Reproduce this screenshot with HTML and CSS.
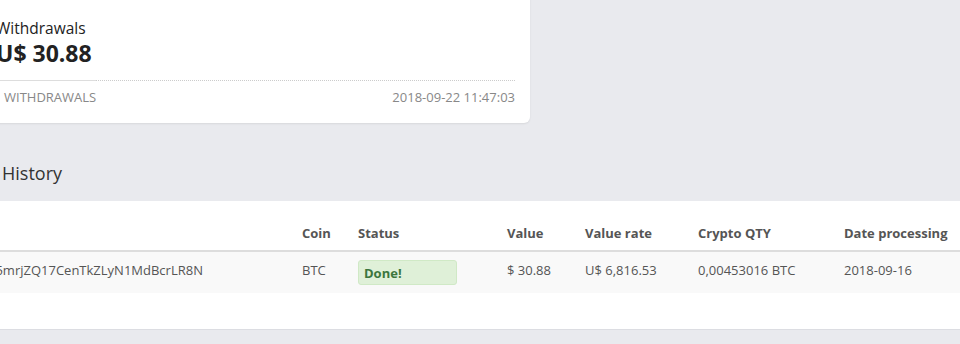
FILE: index.html
```html
<!DOCTYPE html>
<html>
<head>
<meta charset="utf-8">
<link rel="stylesheet" href="styles.css">
</head>
<body>
<div class="page">
  <div class="card">
    <div class="card-title">Withdrawals</div>
    <div class="card-amount">U$ 30.88</div>
    <div class="card-divider"><span class="solid"></span><span class="dotted"></span></div>
    <div class="card-footer">
      <span class="label">WITHDRAWALS</span>
      <span class="date">2018-09-22 11:47:03</span>
    </div>
  </div>
  <h2 class="section-title">History</h2>
  <div class="panel">
    <table class="history">
      <thead>
        <tr>
          <th class="c-addr"></th>
          <th class="c-coin">Coin</th>
          <th class="c-status">Status</th>
          <th class="c-value">Value</th>
          <th class="c-rate">Value rate</th>
          <th class="c-qty">Crypto QTY</th>
          <th class="c-date">Date processing</th>
        </tr>
      </thead>
      <tbody>
        <tr>
          <td class="c-addr">15mrjZQ17CenTkZLyN1MdBcrLR8N</td>
          <td>BTC</td>
          <td><span class="badge">Done!</span></td>
          <td>$ 30.88</td>
          <td>U$ 6,816.53</td>
          <td>0,00453016 BTC</td>
          <td>2018-09-16</td>
        </tr>
      </tbody>
    </table>
  </div>
</div>
</body>
</html>
```
FILE: styles.css
```css
html, body {
  margin: 0;
  padding: 0;
}
body {
  background: #e9eaee;
  font-family: "Open Sans", "Liberation Sans", sans-serif;
  color: #333;
  overflow: hidden;
  width: 960px;
  height: 344px;
}
.page {
  margin-left: -20px;
  width: 1000px;
}
.card {
  width: 519px;
  margin-left: 1px;
  margin-top: -20px;
  background: #fff;
  border-radius: 6px;
  box-shadow: 0 1px 2px rgba(0,0,0,0.08);
  padding: 37px 15px 17px 15px;
}
.card-title {
  font-size: 15.5px;
  line-height: 22px;
  color: #222;
}
.card-amount {
  font-size: 23px;
  font-weight: 700;
  line-height: 28px;
  color: #222;
}
.card-divider {
  display: flex;
  margin-top: 13px;
  height: 1px;
}
.card-divider .solid {
  width: 100px;
  border-top: 1px solid #ddd;
}
.card-divider .dotted {
  flex: 1;
  border-top: 1px dotted #ccc;
}
.card-footer {
  display: flex;
  justify-content: space-between;
  font-size: 13px;
  color: #888;
  margin-top: 7px;
  line-height: 18px;
  padding-left: 8px;
}
.section-title {
  font-weight: 400;
  font-size: 18px;
  margin: 37px 0 0 22px;
  line-height: 26px;
  color: #333;
}
.panel {
  background: #fff;
  margin-top: 15px;
  padding: 23px 0 36px 0;
  border-bottom: 1px solid #dcdde2;
}
.history {
  border-collapse: collapse;
  font-size: 13px;
  color: #555;
  width: 100%;
}
.history th {
  text-align: left;
  font-weight: 700;
  padding: 0 8px 8px 8px;
  border-bottom: 2px solid #ddd;
  line-height: 18px;
}
.history td {
  padding: 9px 8px 8px 8px;
  line-height: 18px;
  background: #f9f9f9;
  vertical-align: top;
}
.c-addr { width: 298px; }
.c-coin { width: 40px; }
.c-status { width: 133px; }
.c-value { width: 62px; }
.c-rate { width: 97px; }
.c-qty { width: 130px; }
.badge {
  display: inline-block;
  width: 99px;
  box-sizing: border-box;
  background: #dff0d8;
  border: 1px solid #d0e9c6;
  border-radius: 3px;
  color: #3c763d;
  font-weight: 700;
  padding: 3px 5px 2px 5px;
  margin-top: -1px;
}
```
